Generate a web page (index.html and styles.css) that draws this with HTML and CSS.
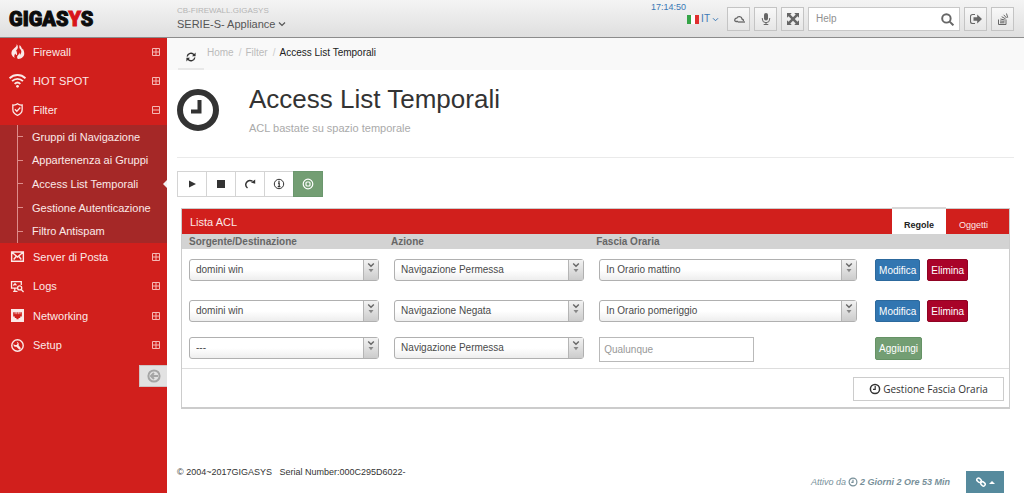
FILE: index.html
```html
<!DOCTYPE html>
<html lang="it">
<head>
<meta charset="utf-8">
<meta name="viewport" content="width=device-width, initial-scale=1">
<title>Access List Temporali</title>
<link rel="stylesheet" href="styles.css">
</head>
<body>
<svg class="symbols" aria-hidden="true">
  <symbol id="plus" viewBox="0 0 8 8"><path d="M.5.5h7v7h-7zM1 4h6M4 1v6" fill="none" stroke="currentColor"/></symbol>
  <symbol id="minus" viewBox="0 0 8 8"><path d="M.5.5h7v7h-7zM1 4h6" fill="none" stroke="currentColor"/></symbol>
  <symbol id="chevron" viewBox="0 0 8 6"><path d="M1 1.5l3 3 3-3" fill="none" stroke="currentColor" stroke-width="1.2"/></symbol>
  <symbol id="spin" viewBox="0 0 15 20"><path d="M4.500 3L7.500 6l3-3" fill="none" stroke="#666" stroke-width="1.500"/><path d="M4.800 9h5.400L7.500 12.500z" fill="#888"/></symbol>
</svg>

<header class="topbar">
  <a class="logo" href="#">GIGAS<span class="logo__accent">Y</span>S</a>
  <div class="project">
    <span class="project__label">CB-FIREWALL.GIGASYS</span>
    <button class="project__name" type="button">SERIE-S- Appliance <svg class="chevron"><use href="#chevron"/></svg></button>
  </div>
  <div class="tools">
    <div class="locale">
      <time class="locale__time">17:14:50</time>
      <button class="locale__lang" type="button">
        <svg class="flag" viewBox="0 0 12 9"><path fill="#35a447" d="M0 0h4v9H0z"/><path fill="#fff" d="M4 0h4v9H4z"/><path fill="#e02f2f" d="M8 0h4v9H8z"/></svg>
        IT <svg class="chevron chevron--small"><use href="#chevron"/></svg>
      </button>
    </div>
    <button class="tool" type="button" aria-label="Cloud"><svg viewBox="0 0 12 12" fill="none" stroke="currentColor" stroke-width="1.300"><path d="M10.500 8.200a2 2 0 0 0-1.500-2.200C8.800 3.500 5 2.600 3.700 5.200 1.500 5.300.900 8.200 3 8.500h2"/><path d="M5 9h7"/></svg></button>
    <button class="tool" type="button" aria-label="Microfono"><svg viewBox="0 0 12 12"><rect x="4" y="0" width="4" height="7.500" rx="2" fill="currentColor"/><path d="M2.300 5v1a3.700 3.700 0 0 0 7.400 0V5M6 9.500V11.500M3.700 11.500h4.600" fill="none" stroke="currentColor"/></svg></button>
    <button class="tool" type="button" aria-label="Schermo intero"><svg viewBox="0 0 12 12" fill="currentColor"><path d="M0 0h4.800L3.300 1.500 6 4.200l2.700-2.700L7.200 0H12v4.800l-1.500-1.500L7.800 6l2.700 2.700L12 7.200V12H7.200l1.500-1.500L6 7.800l-2.700 2.700L4.800 12H0V7.200l1.500 1.500L4.200 6 1.500 3.300 0 4.800z"/></svg></button>
    <form class="search">
      <input class="search__input" type="text" placeholder="Help" aria-label="Help">
      <button class="search__go" type="button" aria-label="Cerca"><svg viewBox="0 0 12 12" fill="none" stroke="currentColor" stroke-width="1.800"><circle cx="5" cy="5" r="3.900"/><path d="M8 8l3.400 3.400"/></svg></button>
    </form>
    <button class="tool" type="button" aria-label="Esci"><svg viewBox="0 0 12 12"><path d="M5 1.500H2.500a2 2 0 0 0-2 2v5a2 2 0 0 0 2 2H5" fill="none" stroke="currentColor" stroke-width="1.100"/><path d="M3.500 4.200h3.700V1.500L12 6l-4.800 4.500V7.800H3.500z" fill="currentColor"/></svg></button>
    <button class="tool" type="button" aria-label="Log"><svg viewBox="0 0 12 12" fill="none" stroke="currentColor"><path d="M1.500 6.500v5h7.500v-5M3 9.800h4.500M3 8l4.500.3M3.400 6l4.400 1M4.700 3.700l3.900 2.200M6.700 1.800L9.600 5M9.500.500l1.200 4.200"/></svg></button>
  </div>
</header>

<div class="shell">
  <aside class="sidebar">
    <nav aria-label="Menu">
      <ul class="menu menu--top">
        <li><a class="menu__link" href="#"><svg class="menu__icon" viewBox="0 0 16 16" fill="currentColor"><path d="M7 0c1 3-3.500 4.500-5 7.500C.7 10.500 1.800 13 5 15c-.8-2-.5-3.500.8-5 .3 1.300.8 1.500 1.600 1.800.3-2.300-.3-3.800-.9-4.800C9 5 9 2 7 0z"/><path d="M10.300 1c-.6 2-.6 3.200 1 4.800 1.300 1.500 1 3.500-.5 5.700-.5-1-.4-1.500-.9-2.500-.5 3-2.300 3-2.300 5 0 1 .5 1.700 1.300 2 3.600-.3 6.300-2.500 6.300-5.900 0-2.300-1-3.500-1.400-5.300l-.8 1C12.500 4.500 12.300 2.800 10.300 1z"/></svg>Firewall<svg class="menu__toggle"><use href="#plus"/></svg></a></li>
        <li><a class="menu__link" href="#"><svg class="menu__icon" viewBox="0 0 16 14" fill="none" stroke="currentColor" stroke-width="1.800"><path d="M.500 5C4.700.800 11.300.800 15.500 5M2.900 7.600c2.900-2.800 7.300-2.800 10.200 0M5.300 10.200c1.600-1.500 3.800-1.500 5.400 0"/><circle cx="8" cy="12.500" r="1.300" fill="currentColor" stroke="none"/></svg>HOT SPOT<svg class="menu__toggle"><use href="#plus"/></svg></a></li>
        <li><a class="menu__link" href="#"><svg class="menu__icon menu__icon--small" viewBox="0 0 12 12" fill="none" stroke="currentColor" stroke-width="1.200"><path d="M6 .700C4.500 2 3 2 1.700 1.800V6c0 3 2 4.500 4.300 5.400C8.300 10.500 10.300 9 10.300 6V1.800C9 2 7.500 2 6 .700z"/><path d="M3.600 5.800l1.800 1.800 3.200-3.400"/></svg>Filter<svg class="menu__toggle"><use href="#minus"/></svg></a></li>
      </ul>
      <ul class="submenu">
        <li class="submenu__item"><a href="#">Gruppi di Navigazione</a></li>
        <li class="submenu__item"><a href="#">Appartenenza ai Gruppi</a></li>
        <li class="submenu__item submenu__item--active"><a href="#" aria-current="page">Access List Temporali</a></li>
        <li class="submenu__item"><a href="#">Gestione Autenticazione</a></li>
        <li class="submenu__item"><a href="#">Filtro Antispam</a></li>
      </ul>
      <ul class="menu menu--bottom">
        <li><a class="menu__link" href="#"><svg class="menu__icon menu__icon--small" viewBox="0 0 12 12" fill="none" stroke="currentColor" stroke-width="1.300"><path d="M.6 1.800h10.800v8.600H.6zM.6 1.800L6 6.500l5.400-4.700M2.500 8.800L4.700 6M9.500 8.800L7.300 6"/></svg>Server di Posta<svg class="menu__toggle"><use href="#plus"/></svg></a></li>
        <li><a class="menu__link" href="#"><svg class="menu__icon menu__icon--small" viewBox="0 0 12 12" fill="none" stroke="currentColor" stroke-width="1.200"><path d="M5.500 7.500h-5v-6h9v3M2 10.500h4M3.500 7.500v3M2.200 5l1.500-1.500L5 5"/><circle cx="8" cy="7.300" r="1.900"/><path d="M9.400 8.800l2.200 2.200"/></svg>Logs<svg class="menu__toggle"><use href="#plus"/></svg></a></li>
        <li><a class="menu__link" href="#"><svg class="menu__icon menu__icon--small" viewBox="0 0 12 12"><path d="M0 0h12v12H0z" fill="currentColor"/><path d="M2 3h8v4H8.500v1.300H7v1.200H5V8.300H3.500V7H2z" fill="#d11f1c"/><path d="M3.800 2.500v2.300M5.300 2.500v2.300M6.800 2.500v2.300M8.300 2.500v2.300" stroke="currentColor" stroke-width=".6"/></svg>Networking<svg class="menu__toggle"><use href="#plus"/></svg></a></li>
        <li><a class="menu__link" href="#"><svg class="menu__icon menu__icon--small" viewBox="0 0 12 12"><circle cx="6" cy="6" r="5.300" fill="none" stroke="currentColor" stroke-width="1.300"/><path d="M5.200 2.600l.9 1.600-.9 1.300H3.300L2.600 4.300C1.900 6 3 7.500 5 7.200L7.800 10l1.400-1.400L7 5.800C7.600 4.200 6.800 2.900 5.200 2.600z" fill="currentColor"/></svg>Setup<svg class="menu__toggle"><use href="#plus"/></svg></a></li>
      </ul>
    </nav>
    <button class="collapse" type="button" aria-label="Riduci menu"><svg viewBox="0 0 14 14" fill="none" stroke="currentColor" stroke-width="2"><circle cx="7" cy="7" r="5.600"/><path d="M11 7H4M7 4L4 7l3 3"/></svg></button>
  </aside>

  <main class="main">
    <div class="ribbon">
      <button class="refresh" type="button" aria-label="Aggiorna"><svg viewBox="0 0 10 10"><path d="M1.200 4.500A3.800 3.800 0 0 1 8 2.800M8.800 5.500A3.800 3.800 0 0 1 2 7.200" fill="none" stroke="currentColor" stroke-width="1.400"/><path d="M9.600.600v3.700H6zM.400 9.400V5.700H4z" fill="currentColor"/></svg></button>
      <nav aria-label="Percorso">
        <ol class="crumbs">
          <li class="crumbs__item"><a href="#">Home</a></li>
          <li class="crumbs__item"><a href="#">Filter</a></li>
          <li class="crumbs__item crumbs__item--current" aria-current="page">Access List Temporali</li>
        </ol>
      </nav>
    </div>

    <div class="content">
      <div class="title">
        <svg class="title__icon" viewBox="0 0 42 42" fill="none" stroke="#333"><circle cx="21" cy="21" r="18" stroke-width="6"/><path d="M22.500 11v11.500H14" stroke-width="4"/></svg>
        <div>
          <h1 class="title__text">Access List Temporali</h1>
          <p class="title__sub">ACL bastate su spazio temporale</p>
        </div>
      </div>

      <div class="actions">
        <button class="action" type="button" aria-label="Avvia"><svg viewBox="0 0 12 12" fill="currentColor"><path d="M3 2.500L10 6 3 9.500z"/></svg></button>
        <button class="action" type="button" aria-label="Ferma"><svg viewBox="0 0 12 12" fill="currentColor"><path d="M2 2h8v8H2z"/></svg></button>
        <button class="action" type="button" aria-label="Riavvia"><svg viewBox="0 0 12 12"><path d="M3.500 10C-.500 6.500 3.500.500 8.500 3.200" fill="none" stroke="currentColor" stroke-width="1.400"/><path d="M11.200 1.500v4.300L7 4.600z" fill="currentColor"/></svg></button>
        <button class="action" type="button" aria-label="Informazioni"><svg viewBox="0 0 12 12" fill="none" stroke="currentColor"><circle cx="6" cy="6" r="4.700"/><path d="M6 2.800v1.400M5 5.200h1.200v3.300M4.700 8.700h2.700" stroke-width="1.200"/></svg></button>
        <button class="action action--on" type="button" aria-label="Stato"><svg viewBox="0 0 12 12" fill="none" stroke="currentColor" stroke-width="1.200"><circle cx="6" cy="6" r="4.800"/><rect x="4" y="4" width="4" height="4" rx="1"/></svg></button>
      </div>

      <section class="card">
        <div class="card__head">
          <h2 class="card__title">Lista ACL</h2>
          <div class="tabs" role="tablist">
            <button class="tab tab--active" type="button" role="tab" aria-selected="true">Regole</button>
            <button class="tab" type="button" role="tab" aria-selected="false">Oggetti</button>
          </div>
        </div>
        <table class="rules">
          <thead>
            <tr><th class="rules__source" scope="col">Sorgente/Destinazione</th><th class="rules__verb" scope="col">Azione</th><th class="rules__time" scope="col">Fascia Oraria</th><td></td></tr>
          </thead>
          <tbody>
            <tr class="rules__row">
              <td><span class="pick"><select aria-label="Sorgente/Destinazione"><option>domini win</option></select><svg class="pick__arrow"><use href="#spin"/></svg></span></td>
              <td><span class="pick"><select aria-label="Azione"><option>Navigazione Permessa</option><option>Navigazione Negata</option></select><svg class="pick__arrow"><use href="#spin"/></svg></span></td>
              <td><span class="pick"><select aria-label="Fascia Oraria"><option>In Orario mattino</option><option>In Orario pomeriggio</option></select><svg class="pick__arrow"><use href="#spin"/></svg></span></td>
              <td><div class="buttons"><button class="btn btn--edit" type="button">Modifica</button><button class="btn btn--delete" type="button">Elimina</button></div></td>
            </tr>
            <tr class="rules__row">
              <td><span class="pick"><select aria-label="Sorgente/Destinazione"><option>domini win</option></select><svg class="pick__arrow"><use href="#spin"/></svg></span></td>
              <td><span class="pick"><select aria-label="Azione"><option>Navigazione Negata</option><option>Navigazione Permessa</option></select><svg class="pick__arrow"><use href="#spin"/></svg></span></td>
              <td><span class="pick"><select aria-label="Fascia Oraria"><option>In Orario pomeriggio</option><option>In Orario mattino</option></select><svg class="pick__arrow"><use href="#spin"/></svg></span></td>
              <td><div class="buttons"><button class="btn btn--edit" type="button">Modifica</button><button class="btn btn--delete" type="button">Elimina</button></div></td>
            </tr>
            <tr class="rules__row rules__row--new">
              <td><span class="pick"><select aria-label="Sorgente/Destinazione"><option>---</option></select><svg class="pick__arrow"><use href="#spin"/></svg></span></td>
              <td><span class="pick"><select aria-label="Azione"><option>Navigazione Permessa</option><option>Navigazione Negata</option></select><svg class="pick__arrow"><use href="#spin"/></svg></span></td>
              <td><input class="field" type="text" placeholder="Qualunque" aria-label="Fascia Oraria"></td>
              <td><button class="btn btn--add" type="button">Aggiungi</button></td>
            </tr>
          </tbody>
        </table>
        <div class="card__foot">
          <button class="manage" type="button"><svg class="manage__icon" viewBox="0 0 12 12" fill="none" stroke="currentColor" stroke-width="1.500"><circle cx="6" cy="6" r="4.600"/><path d="M6.200 3v3.300H4" stroke-width="1.200"/></svg>Gestione Fascia Oraria</button>
        </div>
      </section>
    </div>

    <footer class="footer">
      <span class="footer__copy">© 2004~2017GIGASYS &nbsp; Serial Number:000C295D6022-</span>
      <span class="footer__uptime">Attivo da <svg class="footer__clock" viewBox="0 0 10 10" fill="none" stroke="currentColor" stroke-width="1.200"><circle cx="5" cy="5" r="3.900"/><path d="M5 2.700v2.600H3.300"/></svg> <strong>2 Giorni 2 Ore 53 Min</strong></span>
      <button class="footer__links" type="button" aria-label="Collegamenti"><svg viewBox="0 0 10 10" fill="none" stroke="currentColor" stroke-width="1.500"><rect x="-2.300" y="-1.700" width="4.600" height="3.400" rx="1.500" transform="translate(3 3.200) rotate(42)"/><rect x="-2.300" y="-1.700" width="4.600" height="3.400" rx="1.500" transform="translate(7 6.900) rotate(42)"/></svg><svg class="footer__caret" viewBox="0 0 6 3"><path d="M0 3l3-3 3 3z" fill="currentColor"/></svg></button>
    </footer>
  </main>
</div>
</body>
</html>
```
FILE: styles.css
```css
* { box-sizing: border-box; }

body {
  margin: 0;
  min-height: 100vh;
  display: flex;
  flex-direction: column;
  background: #fff;
  color: #333;
  font: 11px/16px "Liberation Sans", Arial, sans-serif;
}

button, input, select { font: inherit; color: inherit; margin: 0; }
button { padding: 0; border: 0; background: none; cursor: pointer; }
a { color: inherit; text-decoration: none; }
ul, ol { list-style: none; margin: 0; padding: 0; }
svg { display: block; flex: none; }
.symbols { position: absolute; width: 0; height: 0; }

/* Top bar */
.topbar {
  display: flex;
  height: 38px;
  border-bottom: 1px solid #8c8c8c;
  background: linear-gradient(#f4f4f4, #dfdfdf);
}
.logo {
  width: 177px;
  padding-left: 9px;
  font: 900 20px/38px Roboto, "Liberation Sans", sans-serif;
  color: #0c0c0c;
  -webkit-text-stroke: 1px;
}
.logo__accent { color: #d8141b; }
.project { display: flex; flex-direction: column; padding-top: 6px; }
.project__label { font-size: 8px; line-height: 10px; color: #b5b5b5; }
.project__name { display: flex; align-items: center; gap: 3px; color: #555; }
.chevron { width: 8px; height: 6px; }
.chevron--small { width: 7px; height: 5px; }

.tools { display: flex; align-items: flex-start; gap: 4px; margin-left: auto; padding: 7px 10px 0 0; }
.locale { display: flex; flex-direction: column; width: 68px; margin: -6px 4px 0 0; color: #3a78b5; }
.locale__time { font-size: 9px; line-height: 12px; }
.locale__lang { display: flex; align-items: center; align-self: flex-end; gap: 2px; font-size: 10px; line-height: 12px; }
.flag { width: 12px; height: 9px; }
.tool {
  display: grid;
  place-items: center;
  width: 23px;
  height: 24px;
  border: 1px solid #c4c4c4;
  background: linear-gradient(#f8f8f8, #e6e6e6);
  color: #666;
}
.tool svg { width: 12px; height: 12px; }
.search { display: flex; align-items: center; width: 152px; height: 24px; padding: 0 5px 0 7px; border: 1px solid #c8c8c8; background: #fff; }
.search__input { flex: 1; min-width: 0; padding: 0; border: 0; outline: 0; font-size: 10px; background: none; }
.search__input::placeholder { color: #909090; opacity: 1; }
.search__go svg { width: 13px; height: 13px; color: #666; }

/* Sidebar */
.shell { flex: 1; display: flex; }
.sidebar { flex: none; width: 167px; background: #d11f1c; color: #fbe9e7; }
.menu { display: grid; grid-auto-rows: 1fr; }
.menu--top { min-height: 87px; }
.menu--bottom { min-height: 118px; }
.menu__link { display: flex; align-items: center; height: 100%; padding: 0 7px 2px 9px; gap: 7px; }
.menu__icon { width: 17px; height: 15px; }
.menu__icon--small { height: 13px; }
.menu__toggle { width: 8px; height: 8px; margin-left: auto; color: #f5b8b4; }
.submenu {
  display: grid;
  grid-auto-rows: 1fr;
  min-height: 118px;
  padding-left: 17px;
  background: linear-gradient(#de8c8a, #de8c8a) 17px 0 / 1px 100% no-repeat #a52827;
}
.submenu__item { display: flex; align-items: center; gap: 9px; }
.submenu__item::before { content: ""; width: 6px; height: 1px; background: #de8c8a; }
.submenu__item--active::after {
  content: "";
  margin-left: auto;
  border: 4px solid transparent;
  border-left-width: 0;
  border-right-color: #f3f3f3;
}
.collapse { display: grid; place-items: center; width: 28px; height: 22px; margin: 4px 0 0 auto; border: 1px solid #cfc4c4; border-right: 0; background: #e2e2e2; color: #a5a5a5; }
.collapse svg { width: 14px; height: 14px; }

/* Main column */
.main { flex: 1; min-width: 0; display: flex; flex-direction: column; }
.ribbon { display: flex; align-items: flex-start; gap: 3px; height: 32px; padding-left: 11px; background: #f9f9f9; }
.refresh { display: grid; place-items: center; width: 26px; height: 32px; padding-top: 8px; border-bottom: 2px solid #e8e8e8; }
.refresh svg { width: 10px; height: 10px; }
.crumbs { display: flex; padding-top: 7px; font-size: 10px; color: #bbb; }
.crumbs__item + .crumbs__item::before { content: "/"; padding: 0 4px 0 5px; color: #ccc; }
.crumbs__item--current { color: #222; }

.content { padding: 15px 10px 0; }
.title { display: flex; gap: 30px; min-height: 73px; border-bottom: 1px solid #eaeaea; }
.title__icon { width: 42px; height: 42px; margin-top: 4px; }
.title__text { margin: 0; font-weight: normal; font-size: 26px; line-height: 28px; }
.title__sub { margin: 7px 0 0; color: #aaa; }

.actions { display: flex; margin: 13px 0 11px; }
.action { display: grid; place-items: center; width: 30px; height: 26px; margin-right: -1px; border: 1px solid #d4d4d4; background: #fff; }
.action svg { width: 12px; height: 12px; }
.action--on { border-color: #6b976e; background: #739e73; color: #fff; }

/* Rule card */
.card { margin: 0 4px; border: 1px solid #ccc; border-width: 1px 1px 2px; }
.card__head { display: flex; align-items: center; height: 25px; background: #d11f1c; color: #fce8e6; }
.card__title { margin: 0 0 0 8px; font-size: 11px; font-weight: normal; }
.tabs { display: flex; align-self: stretch; margin: -2px 0 0 auto; }
.tab { width: 63px; padding: 6px 8px 0 0; border-top: 2px solid transparent; font-size: 9px; }
.tab--active { width: 54px; padding-right: 0; border-color: #d8d8d8; background: #fff; color: #222; font-weight: bold; }
.rules { width: 100%; border-collapse: collapse; table-layout: fixed; font-size: 10px; }
.rules thead { background: #d3d3d3; }
.rules th { height: 15px; padding: 0 4px; line-height: 15px; text-align: left; color: #666; }
.rules th:first-child { padding-left: 7px; }
.rules thead td { padding: 0; }
.rules__source, .rules__verb { width: 24.8%; }
.rules__time { width: 33%; }
.rules__row { height: 41px; vertical-align: top; }
.rules__row td { padding: 10px 8px 0 7px; }
.rules__row--new { height: auto; }
.rules__row--new td { padding-top: 6px; padding-bottom: 6px; }
.rules__row td:last-child { padding-left: 10px; }
.pick { display: grid; }
.pick > * { grid-area: 1 / 1; }
.pick select {
  appearance: none;
  width: 100%;
  height: 22px;
  padding: 0 20px 1px 6px;
  border: 1px solid #b0b0b0;
  border-radius: 3px;
  background: linear-gradient(#fff 50%, #eee);
  color: #4a4a4a;
}
.pick__arrow { justify-self: end; width: 15px; height: 20px; margin: 1px 1px 0 0; border-left: 1px solid #b5b5b5; background: linear-gradient(#f2f2f2, #ccc); pointer-events: none; }
.field { display: block; width: 155px; max-width: 100%; height: 25px; padding: 0 4px; border: 1px solid #b9b9b9; }
.field::placeholder { color: #999; opacity: 1; }
.buttons { display: flex; gap: 7px; }
.btn { height: 22px; padding: 1px 3px 0; border: 1px solid; border-radius: 2px; color: #fff; }
.btn--edit { border-color: #2c699d; background: #3276b1; }
.btn--delete { border-color: #900323; background: #a90329; }
.btn--add { height: 23px; border-color: #659265; background: #739e73; }
.card__foot { display: flex; justify-content: flex-end; padding: 8px 5px 6px; border-top: 1px solid #ddd; }
.manage { display: flex; align-items: center; justify-content: center; gap: 2px; width: 151px; height: 24px; border: 1px solid #ccc; font: 10px/16px "Open Sans", "Noto Sans", sans-serif; }
.manage__icon { width: 12px; height: 12px; }

/* Footer */
.footer { display: flex; align-items: flex-start; height: 29px; margin-top: auto; padding: 0 20px 0 10px; }
.footer__copy { font-size: 9px; }
.footer__uptime { display: flex; align-items: center; gap: 2px; margin: 10px 16px 0 auto; font-size: 9px; font-style: italic; color: #78909a; }
.footer__clock { width: 10px; height: 10px; }
.footer__links { display: flex; align-items: center; justify-content: center; align-self: flex-end; gap: 3px; width: 38px; height: 22px; background: #568a9d; color: #fff; }
.footer__links svg { width: 10px; height: 10px; }
.footer__links .footer__caret { width: 6px; height: 3px; }
```
